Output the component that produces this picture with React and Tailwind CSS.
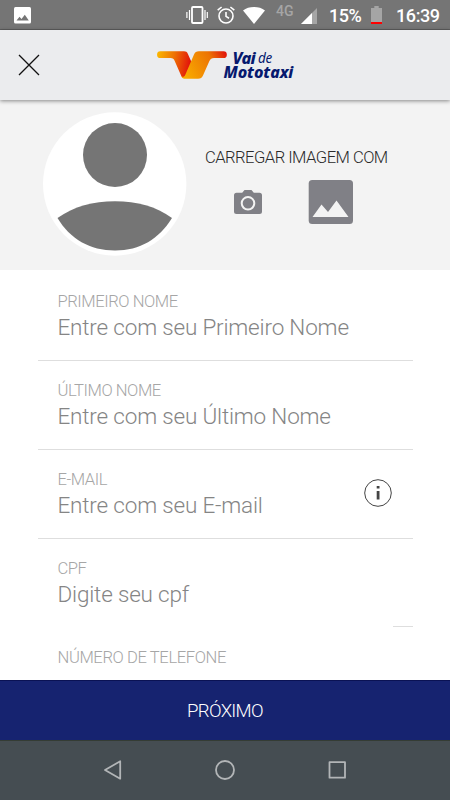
const fields = [
  { label: 'PRIMEIRO NOME', placeholder: 'Entre com seu Primeiro Nome' },
  { label: 'ÚLTIMO NOME', placeholder: 'Entre com seu Último Nome' },
  { label: 'E-MAIL', placeholder: 'Entre com seu E-mail', info: true },
  { label: 'CPF', placeholder: 'Digite seu cpf', shortLine: true },
]

function StatusBar() {
  return (
    <div className="h-[30px] shrink-0 bg-[#757575] border-b border-[#5e5e5e] flex items-center text-white pl-[14px] pr-[9px]">
      <svg className="w-[17px] h-[17px] mt-px" viewBox="0 0 17 17">
        <rect width="17" height="16.5" rx="1.5" fill="#fff" />
        <path d="M2.5 13.5 5.5 9.7 7.5 12 10.8 7.7 14.8 13.5Z" fill="#757575" />
      </svg>

      {/* Vibrate */}
      <svg className="w-[22px] h-[18px] ml-auto mt-px" viewBox="0 0 22 18" fill="none" stroke="#fff">
        <rect x="6" y="1" width="10.5" height="16" rx="1" strokeWidth="1.8" />
        <path d="M3.5 4v10M19 4v10M.9 6v6M21.3 6v6" strokeWidth="1.2" />
      </svg>

      {/* Alarm */}
      <svg className="w-[18px] h-[18px] ml-[9px] mt-px" viewBox="0 0 18 18" fill="none" stroke="#fff" strokeWidth="1.6">
        <circle cx="9" cy="10" r="7" />
        <path d="M9 6v4.4l3 1.8M.7 4.2 4.6 1M17.3 4.2 13.4 1" />
      </svg>

      {/* Wifi */}
      <svg className="w-[22px] h-[17px] ml-[8px] mt-px" viewBox="0 0 22 17">
        <path d="M11 17 0 3.4C3 1.1 6.8 0 11 0s8 1.1 11 3.4Z" fill="#fff" />
      </svg>

      <span className="w-[18px] ml-[11px] mb-[7px] text-[14px] leading-none font-medium text-[#a5a5a5]">4G</span>

      {/* Signal */}
      <svg className="w-[16px] h-[16px] ml-[7px] mt-[2px]" viewBox="0 0 16 16">
        <path d="M0 16 16 0v16Z" fill="#a5a5a5" />
        <path d="M0 16 11 5v11Z" fill="#fff" />
      </svg>

      <span className="w-[33px] ml-[12px] mt-[2px] text-[18px] leading-none font-medium tracking-[-0.5px]">15%</span>

      {/* Battery */}
      <svg className="w-[11px] h-[18px] ml-[9px]" viewBox="0 0 11 18">
        <path d="M3.3 0h4.4v2H11v14H0V2h3.3Z" fill="#a5a5a5" />
        <path d="M0 16h11v2H0Z" fill="#f00" />
      </svg>

      <span className="w-[45px] ml-[14px] mt-[2px] text-[18px] leading-none font-medium tracking-[-0.4px]">16:39</span>
    </div>
  )
}

function Logo() {
  return (
    <div className="flex items-start pt-[21px]">
      <svg className="w-[70px] h-[28px]" viewBox="0 0 70 28">
        <defs>
          <linearGradient id="wingLeft" x1="0" x2="35" y1="0" y2="6" gradientUnits="userSpaceOnUse">
            <stop offset="0" stopColor="#fbb900" />
            <stop offset=".5" stopColor="#ee7203" />
            <stop offset="1" stopColor="#e10f0b" />
          </linearGradient>
          <linearGradient id="wingRight" x1="28" x2="70" y1="24" y2="3" gradientUnits="userSpaceOnUse">
            <stop offset="0" stopColor="#f9ab00" />
            <stop offset=".65" stopColor="#ec7404" />
            <stop offset="1" stopColor="#e1120b" />
          </linearGradient>
        </defs>
        <path d="M3.4.3H27c2 0 3 .8 3.8 2.4L35 12.2 28.6 26c-2 1.6-3.4 1-4.3-1L17.7 10C16.8 7.8 15.9 7 13.5 7H3.4a3.3 3.3 0 0 1 0-6.7Z" fill="url(#wingLeft)" />
        <path d="M24.3 25c.6 1.7 1.5 2.7 3.2 2.7H41c2.8 0 3.8-.8 5-3.2L52.4 10c1-2.1 2.2-3 4.6-3h9.5a3.3 3.3 0 0 0 0-6.7H42c-2.7 0-4 .9-5 3.1L28.2 24c-.8 1.9-2.6 2.5-3.9 1Z" fill="url(#wingRight)" />
      </svg>
      <div className="-ml-[3.5px] flex flex-col font-['Noto_Sans','Open_Sans',sans-serif] italic text-[#06196e] leading-[14px] whitespace-nowrap">
        <div className="pl-[9px] flex gap-[3px]">
          <span className="text-[16.5px] font-extrabold tracking-[-0.7px]">Vai</span>
          <span className="text-[13.5px] tracking-[-0.3px]">de</span>
        </div>
        <span className="text-[16px] font-extrabold tracking-[-0.1px]">Mototaxi</span>
      </div>
    </div>
  )
}

function Header() {
  return (
    <header className="relative z-10 h-[70px] shrink-0 bg-[#ebecee] flex items-start shadow-[0_1px_4px_rgba(0,0,0,0.45)]">
      <button className="ml-[18px] mt-[24px]">
        <svg className="w-[22px] h-[22px]" viewBox="0 0 22 22" fill="none" stroke="#111" strokeWidth="1.3">
          <path d="M1 1l20 20M21 1 1 21" />
        </svg>
      </button>
      <div className="ml-[117px]">
        <Logo />
      </div>
    </header>
  )
}

function PhotoPicker() {
  return (
    <section className="h-[170px] shrink-0 bg-[#f3f3f3] flex items-start">
      <svg className="w-[144px] h-[144px] ml-[43px] mt-[12px]" viewBox="0 0 144 144">
        <circle cx="71.7" cy="72" r="71.7" fill="#fff" />
        <circle cx="72" cy="43" r="32" fill="#757575" />
        <path d="M14.5 106C31 94.5 50 89.3 72 89.3s41 5.200 57 16.700C116 127 97 138.500 72 138.500S27 127 14.500 106Z" fill="#757575" />
      </svg>
      <div className="ml-[18px] mt-[48px]">
        <p className="text-[16.6px] leading-[20px] font-light tracking-[-0.53px] text-[#2a2a2a] whitespace-nowrap">CARREGAR IMAGEM COM</p>
        <div className="flex items-center pl-[29px] mt-[11.5px]">
          <svg className="w-[28px] h-[24px]" viewBox="0 0 28 24">
            <path d="M2.5 2.8h5.7L10.5 0h7l2.3 2.8h5.7A2.5 2.5 0 0 1 28 5.3v16.200a2.500 2.500 0 0 1-2.500 2.500h-23A2.500 2.500 0 0 1 0 21.500V5.300a2.500 2.500 0 0 1 2.500-2.500Z" fill="#808086" />
            <circle cx="14" cy="13.3" r="6.3" fill="none" stroke="#f3f3f3" strokeWidth="2" />
          </svg>
          <svg className="w-[45px] h-[44px] ml-[46px]" viewBox="0 0 45 44">
            <rect x=".7" width="44.3" height="44" rx="3.5" fill="#808086" />
            <path d="M4.5 37 13.5 24.5 20 32 28.5 20.5 40.5 37Z" fill="#f3f3f3" />
          </svg>
        </div>
      </div>
    </section>
  )
}

function Field({ label, placeholder, info, shortLine }) {
  return (
    <div className="h-[89px] shrink-0 mx-[37.5px] flex flex-col">
      <div className="flex-1 flex items-start justify-between pl-[20px] pr-[20.5px]">
        <div className="whitespace-nowrap font-light">
          <p className="mt-[20px] text-[16.6px] leading-[20px] tracking-[-0.45px] text-[#a6a6a6]">{label}</p>
          <p className="mt-px text-[22.5px] leading-[28px] tracking-[-0.18px] text-[#858585]">{placeholder}</p>
        </div>
        {info && (
          <svg className="w-[28px] h-[28px] mt-[29px]" viewBox="0 0 28 28">
            <circle cx="14" cy="14" r="13.3" fill="none" stroke="#444" strokeWidth="1" />
            <path d="M12.7 7h2.8v2.6h-2.8ZM12.7 12h2.8v8.5h-2.8Z" fill="#444" />
          </svg>
        )}
      </div>
      <div className={shortLine ? 'h-px w-[20px] mb-px self-end bg-[#dedede]' : 'h-px w-full bg-[#dedede]'} />
    </div>
  )
}

function NavBar() {
  return (
    <nav className="h-[60px] shrink-0 bg-[#454d52] border-t border-[#343c34] flex items-center justify-center gap-[92px]">
      <svg className="w-[20px] h-[20px] -mt-px" viewBox="0 0 20 20" fill="none" stroke="#b2b5b7" strokeWidth="1.8" strokeLinejoin="round">
        <path d="M2 10 17.2 1.3v17.4Z" />
      </svg>
      <svg className="w-[20px] h-[20px] -mt-px" viewBox="0 0 20 20" fill="none" stroke="#b2b5b7" strokeWidth="1.8">
        <circle cx="10" cy="10" r="9" />
      </svg>
      <svg className="w-[20px] h-[20px] -mt-px" viewBox="0 0 20 20" fill="none" stroke="#b2b5b7" strokeWidth="1.8" strokeLinejoin="round">
        <rect x="2.5" y="2.2" width="15.5" height="15.5" />
      </svg>
    </nav>
  )
}

export default function App() {
  return (
    <div className="w-[450px] h-[800px] flex flex-col overflow-hidden bg-white font-[Roboto,sans-serif]">
      <StatusBar />
      <Header />
      <PhotoPicker />

      <main className="flex-1 min-h-0 overflow-hidden flex flex-col pt-[2px]">
        {fields.map(field => (
          <Field key={field.label} {...field} />
        ))}
        <p className="ml-[57.5px] mt-[20px] text-[16.6px] leading-[20px] font-light tracking-[-0.4px] text-[#a6a6a6]">NÚMERO DE TELEFONE</p>
      </main>

      <button className="h-[60px] shrink-0 bg-[#162370] border-t border-[#0a1254] text-white text-[18.6px] font-light tracking-[-0.7px] pt-[2px]">
        PRÓXIMO
      </button>
      <NavBar />
    </div>
  )
}
